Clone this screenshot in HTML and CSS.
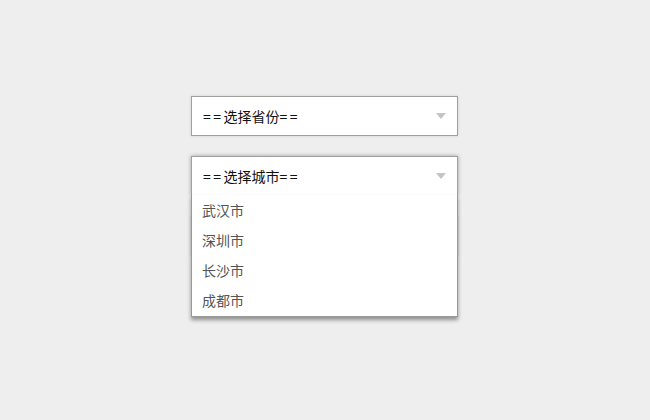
FILE: index.html
```html
<!DOCTYPE html>
<html lang="zh">
<head>
<meta charset="utf-8">
<link rel="stylesheet" href="styles.css">
</head>
<body>
<div class="form">
  <div class="select">
    <span class="label"><span class="eq">==</span>选择省份<span class="eq">==</span></span>
    <span class="arrow"></span>
  </div>
  <div class="select open">
    <span class="label"><span class="eq">==</span>选择城市<span class="eq">==</span></span>
    <span class="arrow"></span>
    <ul class="options">
      <li>武汉市</li>
      <li>深圳市</li>
      <li>长沙市</li>
      <li>成都市</li>
    </ul>
  </div>
  <div class="select hidden-under"></div>
</div>
</body>
</html>
```

FILE: styles.css
```css
html, body {
  margin: 0;
  padding: 0;
  background: #eeeeee;
  font-family: "Noto Sans CJK SC", "Noto Sans", sans-serif;
}
body {
  min-height: 420px;
  padding-right: 1px;
}
.form {
  width: 267px;
  margin: 0 auto;
  padding-top: 96px;
  display: flex;
  flex-direction: column;
  gap: 20px;
}
.select {
  position: relative;
  box-sizing: border-box;
  height: 40px;
  background: #fff;
  border: 1px solid #a0a0a0;
  box-shadow: 0 0 3px rgba(0, 0, 0, 0.12);
  display: flex;
  align-items: center;
  padding: 0 11px;
  font-size: 14px;
  color: #111;
}
.select.open {
  z-index: 2;
  border-bottom-color: #f2f2f2;
  box-shadow: 0 0 4px rgba(0, 0, 0, 0.35);
}
.hidden-under {
  z-index: 1;
}
.label {
  flex: 1;
}
.eq {
  letter-spacing: 2.5px;
}
.arrow {
  width: 0;
  height: 0;
  border-left: 5px solid transparent;
  border-right: 5px solid transparent;
  border-top: 6px solid #c4c4c4;
  margin-top: -1px;
}
.options {
  position: absolute;
  top: 38px;
  left: -1px;
  right: -1px;
  margin: 0;
  padding: 0 0 1px;
  list-style: none;
  background: #fff;
  border: 1px solid #999;
  border-top: none;
  box-shadow: 0 3px 4px rgba(0, 0, 0, 0.4);
}
.options li {
  height: 30px;
  line-height: 30px;
  padding-left: 10px;
  font-size: 14px;
  color: #555;
}
```
